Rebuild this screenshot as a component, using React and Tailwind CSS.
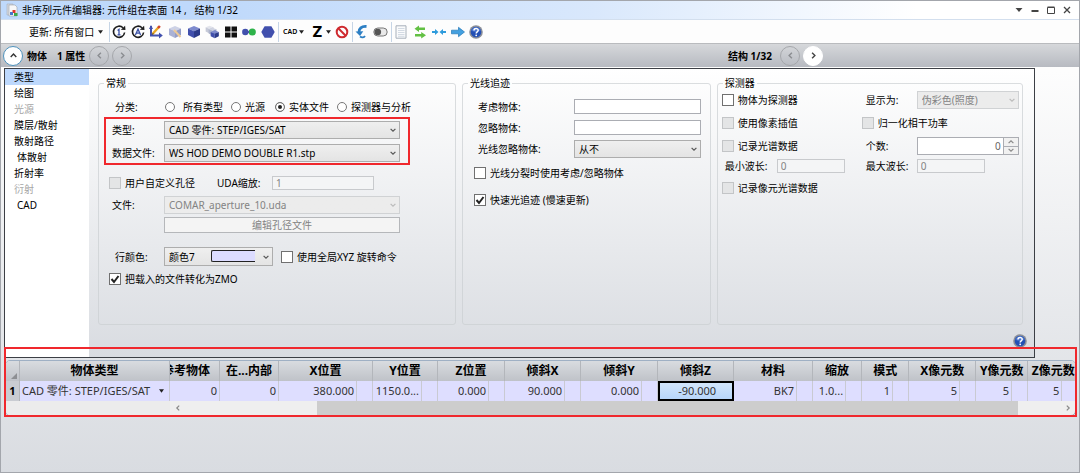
import React, { useState } from 'react';

const MENU = [
  { label: '类型' },
  { label: '绘图' },
  { label: '光源', disabled: true },
  { label: '膜层/散射' },
  { label: '散射路径' },
  { label: '体散射', indent: true },
  { label: '折射率' },
  { label: '衍射', disabled: true },
  { label: 'CAD', indent: true },
];

const CATEGORIES = [
  { label: '所有类型', cls: 'gap-2 w-[66px]' },
  { label: '光源', cls: 'gap-1 w-[44px]' },
  { label: '实体文件', cls: 'gap-1 w-[62px]' },
  { label: '探测器与分析', cls: 'gap-1' },
];

const COLUMNS = [
  { title: 'X位置', width: 78, value: '380.000' },
  { title: 'Y位置', width: 49, value: '1150.0...' },
  { title: 'Z位置', width: 51, value: '0.000' },
  { title: '倾斜X', width: 60, value: '90.000' },
  { title: '倾斜Y', width: 61, value: '0.000' },
  { title: '倾斜Z', width: 60, value: '-90.000', active: true },
  { title: '材料', width: 63, value: 'BK7' },
  { title: '缩放', width: 33, value: '1.0...' },
  { title: '模式', width: 31, value: '1' },
  { title: 'X像元数', width: 51, value: '5' },
  { title: 'Y像元数', width: 36, value: '5' },
  { title: 'Z像元数', width: 34, value: '5' },
];

function Chevron({ dir = 'down', size = 6, className = '' }) {
  const d = { down: 'M1 3l4 4 4-4', up: 'M1 7l4-4 4 4', left: 'M7 1L3 5l4 4', right: 'M3 1l4 4-4 4' }[dir];
  return (
    <svg width={size} height={size} viewBox="0 0 10 10" fill="none" stroke="currentColor" strokeWidth="2" className={className}><path d={d} /></svg>
  );
}

function Triangle() {
  return <svg width="5" height="4" viewBox="0 0 6 4"><path d="M0 0h6L3 4z" fill="#222" /></svg>;
}

function Select({ id, value, disabled, className = '', children }) {
  return (
    <div className={`relative ${className}`}>
      <select id={id} disabled={disabled} defaultValue={value} className="block h-full w-full appearance-none border border-[#adadad] bg-linear-to-b from-[#efefef] to-[#e4e4e4] pl-1 pr-4 text-black disabled:border-[#d0d2d4] disabled:from-[#ececec] disabled:to-[#ececec] disabled:text-[#838383] disabled:opacity-100">
        <option>{value}</option>
      </select>
      {children}
      <Chevron className={`pointer-events-none absolute right-1 top-1/2 -translate-y-1/2 ${disabled ? 'text-[#bbb]' : 'text-[#555]'}`} />
    </div>
  );
}

function Check({ label, checked, disabled, className = '' }) {
  return (
    <label className={`flex h-[14px] items-center gap-1 whitespace-nowrap ${className}`}>
      <span className="relative block size-3 shrink-0">
        <input type="checkbox" defaultChecked={checked} disabled={disabled} className="peer block size-3 appearance-none border border-[#707070] bg-white disabled:border-[#c3c5c7] disabled:bg-[#e4e5e6]" />
        <svg viewBox="0 0 12 12" className="pointer-events-none absolute inset-0 hidden size-3 peer-checked:block" fill="none" stroke="#222" strokeWidth="2"><path d="M2.5 6l2.5 3 4.5-6" /></svg>
      </span>
      {label}
    </label>
  );
}

function Group({ title, className = '', children }) {
  return (
    <fieldset className={`min-w-0 rounded-[3px] border border-[#cbced1]/70 ${className}`}>
      <legend className="ml-[5px] h-[14px] px-[2px]">{title}</legend>
      {children}
    </fieldset>
  );
}

function TextBox({ id, value = '', disabled, className = '' }) {
  return <input id={id} type="text" defaultValue={value} disabled={disabled} className={`border border-[#abadb3] bg-white px-[3px] disabled:border-[#c8cacd] disabled:bg-[#f4f5f6] disabled:text-[#838383] ${className}`} />;
}

function RoundButton({ dir, label, kind }) {
  const look = {
    primary: 'border-[#4f93bd] bg-white text-[#333]',
    active: 'border-white bg-white text-[#444]',
    off: 'border-[#a5a7ab] text-[#8b8d91]',
  }[kind];
  return (
    <button type="button" aria-label={label} className={`flex size-5 shrink-0 items-center justify-center rounded-full border ${look}`}>
      <Chevron dir={dir} size={7} />
    </button>
  );
}

function HelpIcon() {
  return (
    <svg width="14" height="14" viewBox="0 0 14 14">
      <circle cx="7" cy="7" r="6.8" fill="#8b8f98" />
      <circle cx="7" cy="7" r="5.3" fill="#2450b4" />
      <path d="M2.2 5.8a5 5 0 0 1 9.6 0C9 7.300 5 7.300 2.200 5.800z" fill="#5f8be0" opacity=".6" />
      <path d="M5 5.500c0-2.600 4.200-2.500 4.200-.2C9.200 6.900 7.200 6.800 7.200 8.500" fill="none" stroke="#fff" strokeWidth="1.500" />
      <circle cx="7.200" cy="10.300" r=".9" fill="#fff" />
    </svg>
  );
}

function Tool({ label, w = 14, children }) {
  return (
    <button type="button" aria-label={label} className="shrink-0">
      <svg width={w} height="14" viewBox={`0 0 ${w} 14`} fill="none">{children}</svg>
    </button>
  );
}

function Divider({ className = '' }) {
  return <span className={`h-5 w-px shrink-0 bg-[#c6d5e6] ${className}`} />;
}

function RefreshRing() {
  return (
    <>
      <path d="M11 2.800A5.600 5.600 0 1 0 12.600 7.500" stroke="#1d1d1d" strokeWidth="1.600" />
      <path d="M8.800 4.800l4.700.3-.4-4.300z" fill="#1d1d1d" />
    </>
  );
}

function Cube({ x = 0, y = 0, s = 1, top = '#7d8ace', left = '#4150ad', right = '#2c3b8a' }) {
  return (
    <g transform={`translate(${x} ${y}) scale(${s})`}>
      <path d="M7 1l6 2.500-6 2.800L1 3.500z" fill={top} />
      <path d="M1 3.500l6 2.800V13l-6-3z" fill={left} />
      <path d="M13 3.500L7 6.300V13l6-3z" fill={right} />
    </g>
  );
}

function TitleBar() {
  return (
    <header className="flex h-[19px] items-center border-b border-[#d3dfee] bg-linear-to-r from-[#bfd9fb] from-20% via-[#d9e8fc] via-55% to-white to-85% pl-[5px] pr-2">
      <svg width="12" height="14" viewBox="0 0 12 14">
        <path d="M1 1h6v11H1z" fill="#d5d8dd" stroke="#aab0b8" strokeWidth=".6" />
        <path d="M3 2h6l2 2v9H3z" fill="#f7f7f7" stroke="#9ba2ab" strokeWidth=".6" />
        <path d="M6.500 7h3v3h-3z" fill="#e0352b" />
        <path d="M4 9h3v3H4z" fill="#4a76c9" />
        <path d="M8 10h3.500v3H8z" fill="#3ea84a" />
      </svg>
      <h1 className="ml-1 whitespace-pre">非序列元件编辑器: 元件组在表面 14 ,   结构 1/32</h1>
      <div className="ml-auto flex items-center gap-2 text-[#444]">
        <button type="button" aria-label="菜单"><svg className="block" width="8" height="8" viewBox="0 0 8 8"><path d="M.5 2h7L4 6z" fill="currentColor" /></svg></button>
        <button type="button" aria-label="最小化"><svg className="block" width="8" height="8" viewBox="0 0 8 8"><path d="M.5 4h7v2h-7z" fill="currentColor" /></svg></button>
        <button type="button" aria-label="最大化"><svg className="block" width="8" height="8" viewBox="0 0 8 8"><path d="M.5 1.500h7v6h-7zM.5 1h7" fill="none" stroke="currentColor" /></svg></button>
        <button type="button" aria-label="关闭"><svg className="block" width="8" height="8" viewBox="0 0 8 8"><path d="M1 1l6 6M7 1L1 7" stroke="currentColor" strokeWidth="1.300" /></svg></button>
      </div>
    </header>
  );
}

function Toolbar() {
  return (
    <div className="flex h-[23px] items-center bg-[#fdfdfd] pl-7">
      <button type="button" className="flex w-[75px] items-center gap-1 whitespace-nowrap">更新: 所有窗口 <Triangle /></button>
      <Divider className="ml-[5px]" />
      <div className="ml-[2px] flex w-[163px] shrink-0 items-center justify-between">
        <Tool label="更新"><RefreshRing /><path d="M5.600 5.500L7 4.400v5.400M5.500 9.800h3" stroke="#3a51a6" strokeWidth="1.300" /></Tool>
        <Tool label="全部更新"><RefreshRing /><path d="M4.400 10L7 4.200 9.600 10M5.300 8.200h3.400" stroke="#3a51a6" strokeWidth="1.300" /></Tool>
        <Tool label="编辑坐标">
          <path d="M2 1v9.500h9" stroke="#4150ad" strokeWidth="2" />
          <path d="M10 7.500l3.800 3-3.800 3zM0 4l2-4 2 4z" fill="#4150ad" />
          <path d="M3.500 9l6.800-7.500" stroke="#e9a825" strokeWidth="2.400" />
          <path d="M9 3l1.900-2" stroke="#d2452e" strokeWidth="2.500" />
          <path d="M2.800 10l1-2 1 1z" fill="#222" />
        </Tool>
        <Tool label="编辑物体"><Cube top="#cdd2e6" left="#aab2d5" right="#939dc8" /><path d="M6 5l6.500 7" stroke="#edc996" strokeWidth="2" /></Tool>
        <Tool label="实体"><Cube /></Tool>
        <Tool label="复制实体"><Cube s={0.65} top="#e2e4ec" left="#c6cad8" right="#b5bacb" /><Cube x={3} y={2} s={0.65} top="#d0d4e2" left="#adb4cb" right="#9ba4c1" /><Cube x={5} y={4.5} s={0.68} /></Tool>
        <Tool label="平铺"><path d="M1 1.500h5.500v5H1zM7.500 1.500H13v5H7.500zM1 7.500h5.500v5H1zM7.500 7.500H13v5H7.500z" fill="#111" /></Tool>
        <Tool label="布尔运算"><circle cx="3.300" cy="7" r="3.200" fill="#4150ad" /><circle cx="10.300" cy="7" r="3.600" fill="#2eb34a" /><circle cx="6.300" cy="7" r="1" fill="#4150ad" /></Tool>
        <Tool label="多边形"><path d="M3.600 1.300h6.800L13.700 7l-3.300 5.700H3.600L.3 7z" fill="#4150ad" /></Tool>
      </div>
      <Divider className="ml-[3px]" />
      <button type="button" className="ml-1 flex items-center gap-[2px] text-[7px] font-semibold">CAD <Triangle /></button>
      <button type="button" className="ml-2 flex items-center gap-1 font-['Inter'] text-[15px] leading-[14px] font-extrabold">Z <Triangle /></button>
      <div className="ml-1 flex items-center">
        <Tool label="禁用"><circle cx="7" cy="7" r="5.300" stroke="#cf2a2f" strokeWidth="2" /><path d="M3.300 3.300l7.400 7.400" stroke="#cf2a2f" strokeWidth="2" /></Tool>
      </div>
      <Divider className="ml-[3px]" />
      <div className="ml-[2px] flex items-center gap-1">
        <Tool label="撤销"><path d="M11.500 1.500C6.500 1 3.800 3.500 4 7.500" stroke="#2c7fc4" strokeWidth="2.800" /><path d="M.5 6.500l7.800-.3L5 11z" fill="#2c7fc4" /><path d="M5 11.500c2 1.500 4 1 5-.5" stroke="#2c7fc4" strokeWidth="1.800" /></Tool>
        <Tool label="切换" w={15}><rect x=".8" y="3" width="13.400" height="8" rx="4" fill="#e9e9e9" stroke="#777" /><circle cx="4.800" cy="7" r="3.300" fill="#555" /></Tool>
      </div>
      <Divider className="ml-[3px]" />
      <div className="ml-[2px] flex w-[89px] shrink-0 items-center justify-between">
        <Tool label="列表"><path d="M2 .8h10v12.400H2z" fill="#fafbfc" stroke="#a7b0ba" /><path d="M4 3.500h6.500M4 5.500h6.500M4 7.500h6.500M4 9.500h6.500M4 11.300h6.500" stroke="#c9d2dc" strokeWidth=".8" /></Tool>
        <Tool label="交换"><path d="M12 2.500v2.600H6v2L1.500 3.800 6 .5v2z" fill="#62c043" /><path d="M2 8.900v2.600h6.200v2L13 10.200 8.200 6.900v2z" fill="#62c043" /></Tool>
        <Tool label="列宽"><path d="M0 6h3V4l3.500 3L3 10V8H0zM14 6h-3V4L7.500 7l3.500 3V8h3z" fill="#2e9bdc" /></Tool>
        <Tool label="前进"><path d="M.5 5.200h7V2.300L13.500 7l-6 4.700V8.800h-7z" fill="#43a0e0" stroke="#2478b8" strokeWidth=".7" /></Tool>
        <button type="button" aria-label="帮助"><HelpIcon /></button>
      </div>
    </div>
  );
}

function GeneralGroup() {
  return (
    <Group title="常规" className="flex-[358_1_0] pb-[38px]">
      <div className="mt-[10px] flex h-[14px] items-center pl-4">
        <span className="w-[50px]">分类:</span>
        {CATEGORIES.map(c => (
          <label key={c.label} className={`flex items-center whitespace-nowrap ${c.cls}`}>
            <input type="radio" name="category" defaultChecked={c.label === '实体文件'} className="size-[10px] shrink-0 appearance-none rounded-full border border-[#777] bg-white checked:bg-[#222] checked:shadow-[inset_0_0_0_2px_#fff]" />
            {c.label}
          </label>
        ))}
      </div>
      <div className="ml-[5px] mt-[3px] flex w-[306px] flex-col gap-[5px] border-2 border-[#f0282d] pb-px pl-[6px] pt-[2px]">
        <div className="flex items-center">
          <label htmlFor="type" className="w-[52px]">类型:</label>
          <Select id="type" value="CAD 零件: STEP/IGES/SAT" className="h-[18px] w-[236px]" />
        </div>
        <div className="flex items-center">
          <label htmlFor="file" className="w-[52px]">数据文件:</label>
          <Select id="file" value="WS HOD DEMO DOUBLE R1.stp" className="h-[18px] w-[236px]" />
        </div>
      </div>
      <div className="mt-[11px] flex items-center pl-[10px]">
        <Check label="用户自定义孔径" disabled className="w-[108px]" />
        <label htmlFor="uda" className="w-[55px] whitespace-nowrap">UDA缩放:</label>
        <TextBox id="uda" value="1" disabled className="h-[14px] w-[102px]" />
      </div>
      <div className="mt-[6px] flex items-center pl-[13px]">
        <label htmlFor="aperture" className="w-[52px]">文件:</label>
        <Select id="aperture" value="COMAR_aperture_10.uda" disabled className="h-[18px] w-[236px]" />
      </div>
      <button type="button" disabled className="ml-[65px] mt-[3px] block h-4 w-[236px] border border-[#b5b7ba] bg-[#f4f4f4] text-[#838383]">编辑孔径文件</button>
      <div className="mt-[14px] flex items-center pl-4">
        <label htmlFor="color" className="w-[49px]">行颜色:</label>
        <Select id="color" value="颜色7" className="h-[19px] w-[109px]">
          <span className="pointer-events-none absolute left-[47px] top-[3px] h-3 w-[44px] rounded-l-[2px] border border-r-0 border-[#222] bg-[#dcdcff]" />
        </Select>
        <Check label="使用全局XYZ 旋转命令" className="ml-2" />
      </div>
      <Check label="把载入的文件转化为ZMO" checked className="ml-[10px] mt-[6px]" />
    </Group>
  );
}

function RayGroup() {
  return (
    <Group title="光线追迹" className="flex-[248_1_0]">
      <div className="mt-[9px] flex items-center pl-[15px]">
        <label htmlFor="consider" className="w-24">考虑物体:</label>
        <TextBox id="consider" className="h-[15px] w-[127px]" />
      </div>
      <div className="mt-[6px] flex items-center pl-[15px]">
        <label htmlFor="ignore" className="w-24">忽略物体:</label>
        <TextBox id="ignore" className="h-[15px] w-[127px]" />
      </div>
      <div className="mt-[5px] flex items-center pl-[15px]">
        <label htmlFor="rays" className="w-24">光线忽略物体:</label>
        <Select id="rays" value="从不" className="h-[18px] w-[127px]" />
      </div>
      <Check label="光线分裂时使用考虑/忽略物体" className="ml-[11px] mt-2" />
      <Check label="快速光追迹 (慢速更新)" checked className="ml-[11px] mt-[13px]" />
    </Group>
  );
}

function DetectorGroup() {
  return (
    <Group title="探测器" className="flex-[306_1_0]">
      <div className="mt-px grid grid-cols-[140px_1fr] items-center gap-y-1 pl-1">
        <Check label="物体为探测器" />
        <div className="flex items-center pl-1">
          <label htmlFor="show" className="w-[51px]">显示为:</label>
          <Select id="show" value="伪彩色(照度)" disabled className="h-[18px] w-[102px]" />
        </div>
        <Check label="使用像素插值" disabled className="my-[3px]" />
        <Check label="归一化相干功率" disabled />
        <Check label="记录光谱数据" disabled />
        <div className="flex items-center pl-1">
          <label htmlFor="count" className="w-[51px]">个数:</label>
          <div className="flex h-[18px] w-[102px] border border-[#abadb3] bg-white">
            <input id="count" type="text" defaultValue="0" className="w-0 flex-1 bg-transparent pr-[2px] text-right text-[#666]" />
            <div className="flex w-[15px] flex-col gap-px border-l border-[#abadb3] bg-[#abadb3] text-[#8a8a8a]">
              <button type="button" aria-label="增加" className="flex flex-1 items-center justify-center bg-[#f1f1f1]"><Chevron dir="up" /></button>
              <button type="button" aria-label="减少" className="flex flex-1 items-center justify-center bg-[#f1f1f1]"><Chevron /></button>
            </div>
          </div>
        </div>
        <div className="flex items-center pl-[3px]">
          <label htmlFor="minWave" className="w-[52px]">最小波长:</label>
          <TextBox id="minWave" value="0" disabled className="h-[14px] w-[68px]" />
        </div>
        <div className="flex items-center pl-1">
          <label htmlFor="maxWave" className="w-[51px]">最大波长:</label>
          <TextBox id="maxWave" value="0" disabled className="h-[14px] w-[68px]" />
        </div>
        <Check label="记录像元光谱数据" disabled className="mt-1" />
      </div>
    </Group>
  );
}

function ObjectTable() {
  const line = 'border-r border-[#c9cad2]';
  return (
    <div className="overflow-hidden rounded-[5px] border border-[#9fb0c4] bg-[#efefef]">
      <table className="w-full table-fixed border-separate border-spacing-0 text-[11px]">
        <colgroup>
          <col style={{ width: 14 }} />
          <col style={{ width: 150 }} />
          <col style={{ width: 50 }} />
          <col style={{ width: 59 }} />
          {COLUMNS.map(c => (
            <React.Fragment key={c.title}>
              <col style={{ width: c.width }} />
              <col style={{ width: 16 }} />
            </React.Fragment>
          ))}
        </colgroup>
        <thead>
          <tr className="h-5 bg-linear-to-b from-[#d9dce0] to-[#bfc2c8] text-[12px] leading-[14px]">
            <th className="border-r border-[#b3b6bb] p-0 align-bottom"><svg className="mb-[2px] ml-auto mr-[2px]" width="6" height="6" viewBox="0 0 6 6"><path d="M6 0v6H0z" fill="#8d8f93" /></svg></th>
            <th className="border-r border-[#b3b6bb] p-0">物体类型</th>
            <th className="overflow-hidden border-r border-[#b3b6bb] p-0">
              <div className="flex justify-end overflow-hidden whitespace-nowrap pr-[9px]">参考物体</div>
            </th>
            <th className="whitespace-nowrap border-r border-[#b3b6bb] p-0">在...内部</th>
            {COLUMNS.map(c => <th key={c.title} colSpan={2} className="whitespace-nowrap border-r border-[#b3b6bb] p-0 last:border-r-0">{c.title}</th>)}
          </tr>
        </thead>
        <tbody>
          <tr className="h-5 bg-[#dedeff] leading-[14px] text-[#333]">
            <th className="border-r border-[#b3b6bb] bg-[#c9ccd2] p-0 text-black">1</th>
            <td className={`p-0 ${line}`}>
              <div className="relative flex items-center">
                <select aria-label="物体类型" className="w-full appearance-none bg-transparent pl-[2px]"><option>CAD 零件: STEP/IGES/SAT</option></select>
                <span className="pointer-events-none absolute right-[5px]"><Triangle /></span>
              </div>
            </td>
            <td className={`p-0 pr-[2px] text-right ${line}`}>0</td>
            <td className={`p-0 pr-[2px] text-right ${line}`}>0</td>
            {COLUMNS.map(c => (
              <React.Fragment key={c.title}>
                <td className={c.active ? 'whitespace-nowrap border-2 border-r-0 border-black bg-linear-to-b from-[#d3e6fb] to-[#b7d6fa] p-0 pr-[2px] text-right' : `whitespace-nowrap p-0 pr-[2px] text-right ${line}`}>{c.value}</td>
                <td className={c.active ? 'border-2 border-l-0 border-black bg-linear-to-b from-[#d3e6fb] to-[#b7d6fa] p-0' : `p-0 ${line}`} />
              </React.Fragment>
            ))}
          </tr>
        </tbody>
      </table>
      <div className="flex h-[14px] text-[#888]">
        <span className="w-[164px] shrink-0 bg-[#ececec]" />
        <button type="button" aria-label="向左滚动" className="flex w-[15px] shrink-0 items-center justify-center"><Chevron dir="left" /></button>
        <div className="flex-1 pl-[132px] pr-[42px]"><div className="h-full bg-[#cdcdcd]" /></div>
        <button type="button" aria-label="向右滚动" className="flex w-[15px] shrink-0 items-center justify-center"><Chevron dir="right" /></button>
      </div>
    </div>
  );
}

export default function App() {
  const [page, setPage] = useState('类型');

  return (
    <div className="flex min-h-screen flex-col border border-[#a3a6ac] bg-linear-to-b from-[#fdfdfd] from-15% to-[#d9dce1] font-['Noto_Sans','Noto_Sans_CJK_SC',sans-serif] text-[10px] leading-[14px] text-black">
      <TitleBar />
      <Toolbar />
      <div className="flex h-6 items-center border-t border-[#b9bbbe] bg-linear-to-b from-[#d6d8db] to-[#b7bac1] pl-[2px] font-bold">
        <RoundButton dir="up" label="折叠" kind="primary" />
        <span className="ml-1 w-[30px]">物体</span>
        <span className="w-8 whitespace-nowrap">1 属性</span>
        <RoundButton dir="left" label="上一个物体" kind="off" />
        <span className="w-[3px]" />
        <RoundButton dir="right" label="下一个物体" kind="off" />
        <span className="ml-auto w-[52px] whitespace-nowrap">结构 1/32</span>
        <RoundButton dir="left" label="上一个结构" kind="off" />
        <span className="w-[3px]" />
        <div className="mr-64"><RoundButton dir="right" label="下一个结构" kind="active" /></div>
      </div>

      <div className="ml-[3px] mr-11 mt-px flex border border-[#3c3f45] bg-linear-to-b from-white to-[#d9dce1]">
        <nav className="w-[84px] shrink-0 bg-white">
          {MENU.map(m => (
            <button key={m.label} type="button" disabled={m.disabled} onClick={() => setPage(m.label)}
              className={`block h-4 w-full text-left disabled:text-[#a5a5a5] ${m.indent ? 'pl-3' : 'pl-[9px]'} ${page === m.label ? 'bg-[#bdd8fc]' : ''}`}>
              {m.label}
            </button>
          ))}
        </nav>
        <div className="min-w-0 flex-1 pl-[9px] pr-[11px] pt-[7px]">
          <div className="flex gap-[6px]">
            <GeneralGroup />
            <RayGroup />
            <DetectorGroup />
          </div>
          <div className="-mr-1 flex h-8 items-center justify-end">
            <button type="button" aria-label="帮助"><HelpIcon /></button>
          </div>
        </div>
      </div>

      <div className="relative ml-1 mr-[3px] mt-[2px]">
        <ObjectTable />
        <div className="pointer-events-none absolute -bottom-px -left-px -right-px -top-[13px] border-2 border-[#f0282d]" />
      </div>
    </div>
  );
}
